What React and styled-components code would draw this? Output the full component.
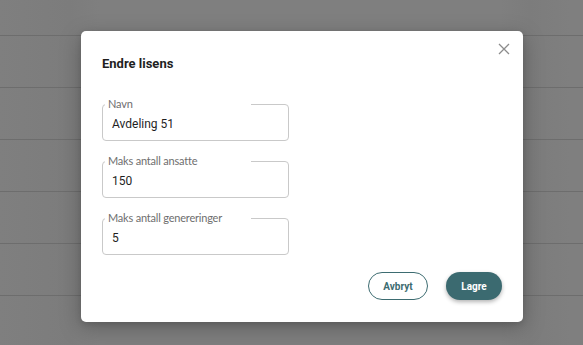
import React from "react";
import styled, { createGlobalStyle } from "styled-components";

const GlobalStyle = createGlobalStyle`
  html, body {
    margin: 0;
    padding: 0;
    width: 583px;
    height: 345px;
    overflow: hidden;
    background: #7f7f7f;
    font-family: Roboto, "Liberation Sans", sans-serif;
  }
`;

const fields = [
  { label: "Navn", value: "Avdeling 51" },
  { label: "Maks antall ansatte", value: "150" },
  { label: "Maks antall genereringer", value: "5" },
];

function App() {
  return (
    <>
      <GlobalStyle />
      <Page>
        <Row />
        <Row />
        <Row />
        <Row />
        <Row />
        <Row />
      </Page>
      <Modal>
        <CloseButton aria-label="Lukk">
          <svg width="12" height="12" viewBox="0 0 12 12">
            <path
              d="M1 1 L11 11 M11 1 L1 11"
              stroke="#8c8c8c"
              strokeWidth="1.3"
              fill="none"
            />
          </svg>
        </CloseButton>
        <Title>Endre lisens</Title>
        <Form>
          {fields.map((f) => (
            <Field key={f.label}>
              <FieldLabel>{f.label}</FieldLabel>
              <FieldValue>{f.value}</FieldValue>
            </Field>
          ))}
        </Form>
        <Actions>
          <OutlineButton>Avbryt</OutlineButton>
          <FilledButton>Lagre</FilledButton>
        </Actions>
      </Modal>
    </>
  );
}

const Page = styled.div`
  display: flex;
  flex-direction: column;
  width: 583px;
  height: 345px;
  padding-top: 35px;
  box-sizing: border-box;
  background: linear-gradient(
    to right,
    #7f7f7f 0,
    #7c7c7c 70px,
    #7f7f7f 100px,
    #7f7f7f 500px,
    #7c7c7c 530px,
    #7f7f7f 570px
  );
`;

const Row = styled.div`
  height: 52px;
  flex-shrink: 0;
  border-top: 1px solid #6d6d6d;
  box-sizing: border-box;
`;

const Modal = styled.div`
  position: absolute;
  left: 81px;
  top: 31px;
  width: 442px;
  height: 291px;
  box-sizing: border-box;
  background: #ffffff;
  border-radius: 5px;
  box-shadow: 0 6px 22px rgba(0, 0, 0, 0.25), 0 2px 6px rgba(0, 0, 0, 0.12);
  padding: 25px 21px 22px 21px;
  display: flex;
  flex-direction: column;
`;

const CloseButton = styled.button`
  position: absolute;
  top: 8px;
  right: 9px;
  width: 20px;
  height: 20px;
  border: none;
  background: transparent;
  padding: 0;
  display: flex;
  align-items: center;
  justify-content: center;
  cursor: pointer;
`;

const Title = styled.h2`
  margin: 0;
  font-size: 13px;
  line-height: 16px;
  font-weight: 700;
  color: #1f1f1f;
`;

const Form = styled.div`
  display: flex;
  flex-direction: column;
  gap: 20px;
  margin-top: 32px;
`;

const Field = styled.div`
  position: relative;
  width: 187px;
  height: 37px;
  box-sizing: border-box;
  border: 1px solid #c9c9c9;
  border-radius: 4px;
  display: flex;
  align-items: center;
  padding: 2px 0 0 9px;
`;

const FieldLabel = styled.span`
  position: absolute;
  top: -7px;
  left: 2px;
  min-width: 146px;
  box-sizing: border-box;
  padding: 0 3px;
  background: #ffffff;
  font-family: Lato, "Noto Sans", sans-serif;
  font-weight: 400;
  font-size: 11px;
  letter-spacing: -0.2px;
  line-height: 12px;
  color: #6e6e6e;
`;

const FieldValue = styled.span`
  font-size: 12px;
  color: #1f1f1f;
`;

const Actions = styled.div`
  display: flex;
  justify-content: flex-end;
  gap: 18px;
  margin-top: auto;
`;

const BaseButton = styled.button`
  height: 28px;
  border-radius: 14px;
  font-family: Roboto, "Liberation Sans", sans-serif;
  font-size: 10px;
  font-weight: 700;
  padding: 0;
  cursor: pointer;
  box-sizing: border-box;
`;

const OutlineButton = styled(BaseButton)`
  width: 60px;
  background: #ffffff;
  border: 1px solid #3d6c71;
  color: #3d6c71;
`;

const FilledButton = styled(BaseButton)`
  width: 56px;
  background: #3b6a70;
  border: none;
  color: #ffffff;
  box-shadow: 0 2px 4px rgba(0, 0, 0, 0.3);
`;

export default App;
